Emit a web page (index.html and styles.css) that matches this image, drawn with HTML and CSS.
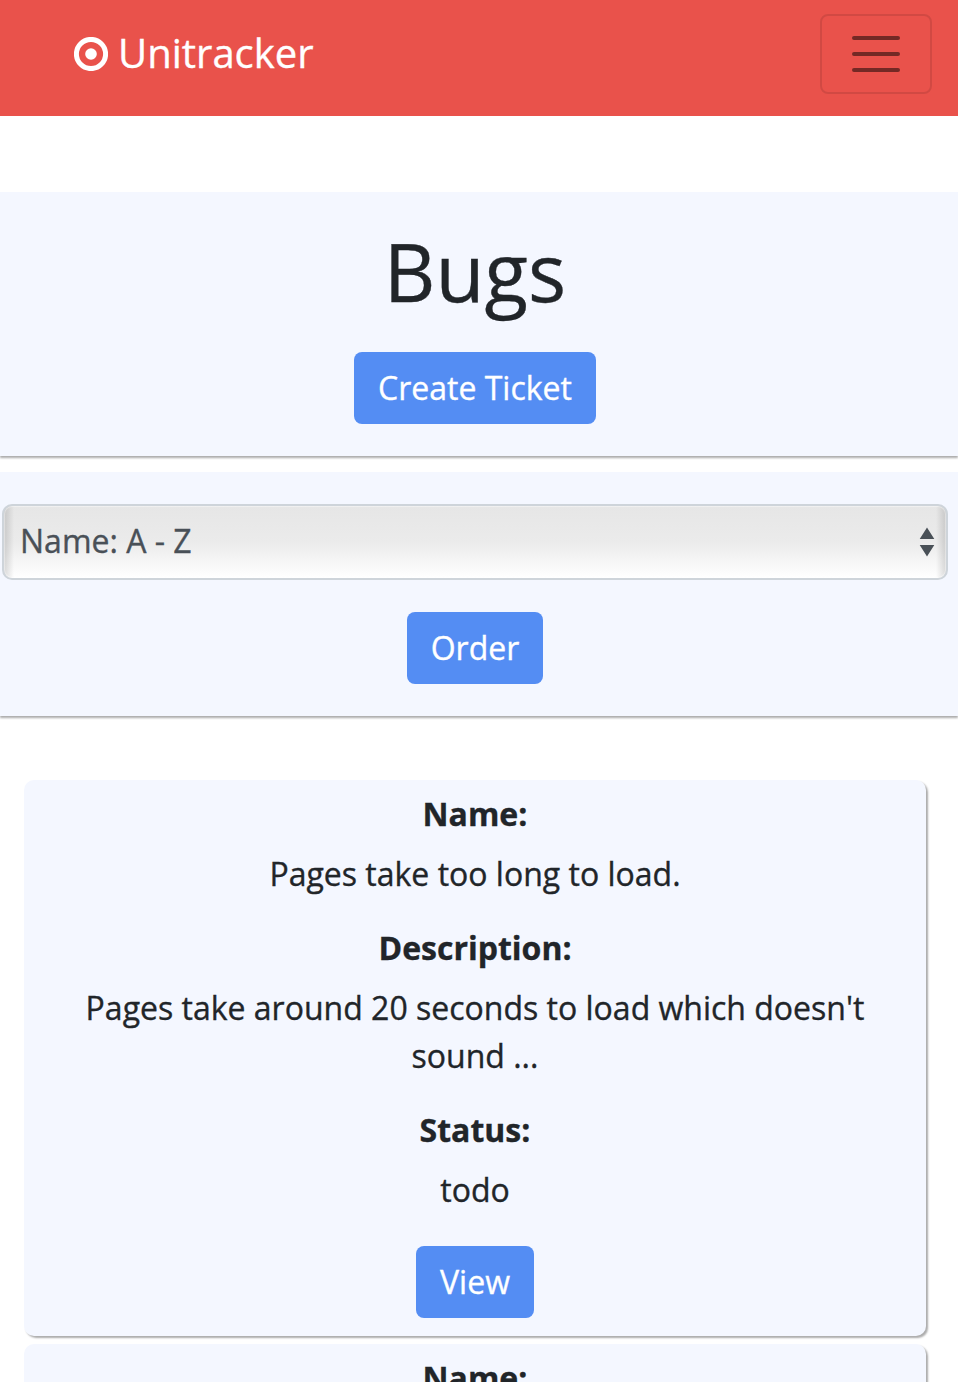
FILE: index.html
```html
<!DOCTYPE html>
<html lang="en">
<head>
<meta charset="utf-8">
<title>Unitracker</title>
<link rel="stylesheet" href="styles.css">
</head>
<body>
<header class="navbar">
  <a class="brand">
    <svg class="brand-icon" viewBox="0 0 34 34"><circle cx="17" cy="17" r="14.6" fill="none" stroke="currentColor" stroke-width="5"/><circle cx="17" cy="17" r="5.8" fill="currentColor"/></svg>
    <span>Unitracker</span>
  </a>
  <button class="toggler" aria-label="Menu">
    <svg viewBox="0 0 60 60"><path d="M8 14h44M8 30h44M8 46h44" stroke="currentColor" stroke-width="4" stroke-linecap="round"/></svg>
  </button>
</header>
<main>
  <section class="band intro">
    <h1>Bugs</h1>
    <a class="btn">Create Ticket</a>
  </section>
  <section class="band order">
    <div class="select"><span>Name: A - Z</span><svg viewBox="0 0 16 32"><path d="M8 1.5l7.3 11.5H.7zM8 30.500l7.300-11.500H.7z" fill="currentColor"/></svg></div>
    <a class="btn">Order</a>
  </section>
  <section class="tickets">
    <article class="card">
      <h2>Name:</h2>
      <p>Pages take too long to load.</p>
      <h2>Description:</h2>
      <p>Pages take around 20 seconds to load which doesn't sound ...</p>
      <h2>Status:</h2>
      <p>todo</p>
      <a class="btn">View</a>
    </article>
    <article class="card">
      <h2>Name:</h2>
    </article>
  </section>
</main>
</body>
</html>
```
FILE: styles.css
```css
* { box-sizing: border-box; }
html, body { height: 1382px; overflow: hidden; }
body { margin: 0; background: #fff; color: #212529; font: 32px/48px "Open Sans", sans-serif; -webkit-text-stroke: 0.35px currentColor; }
.navbar { height: 116px; background: #e9524b; display: flex; align-items: flex-start; justify-content: space-between; padding: 14px 26px 0 74px; }
.brand { display: flex; align-items: center; gap: 10px; color: #fff; font-size: 40px; line-height: 60px; padding-top: 9px; }
.brand-icon { width: 34px; height: 34px; margin-top: 1px; }
.toggler { width: 112px; height: 80px; padding: 0; border: 2px solid rgba(0,0,0,.1); border-radius: 8px; background: transparent; color: rgba(0,0,0,.5); display: flex; align-items: center; justify-content: center; }
.toggler svg { width: 60px; height: 60px; }
.toggler path { stroke-linecap: round; }
.band { background: #f4f7ff; box-shadow: 0 2px 2px rgba(0,0,0,.33); display: flex; flex-direction: column; align-items: center; padding-right: 8px; }
.intro { margin-top: 76px; height: 264px; padding-top: 31px; }
h1 { margin: 0 0 33px; font-size: 80px; line-height: 96px; font-weight: 400; }
.btn { display: block; height: 72px; padding: 12px 24px; border-radius: 8px; background: #548df3; color: #fff; }
.order { margin-top: 16px; height: 244px; padding: 32px 10px 0 2px; }
.select {
  width: 100%; height: 76px; margin-bottom: 32px; padding: 0 11px 0 16px;
  border: 2px solid #ced4da; border-radius: 10px; color: #495057;
  display: flex; align-items: center; justify-content: space-between;
  background:
    linear-gradient(90deg, rgba(0,0,0,.14), transparent 10px, transparent calc(100% - 10px), rgba(0,0,0,.14)),
    linear-gradient(#e6e6e6, #ebebeb 50%, #fff);
  box-shadow: inset 0 0 1px 1px rgba(255,255,255,.45);
}
.select span { padding-bottom: 2px; }
.select svg { width: 16px; height: 32px; }
.tickets { padding: 64px 32px 0 24px; }
.card { height: 556px; margin-bottom: 8px; padding: 10px 48px 0; border-radius: 10px; background: #f4f7ff; box-shadow: 2px 2px 2px rgba(0,0,0,.33); display: flex; flex-direction: column; align-items: center; text-align: center; }
.card h2 { margin: 0 0 12px; font-size: 32px; line-height: 48px; font-weight: 700; }
.card p { margin: 0 0 26px; }
.card .btn { margin-top: 6px; }
```
